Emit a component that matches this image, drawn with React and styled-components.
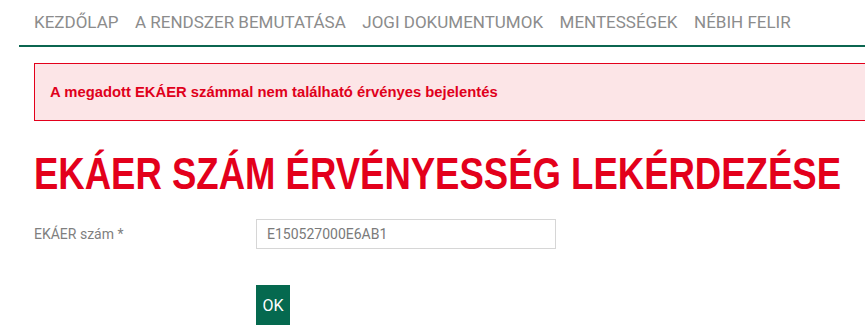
import React from "react";
import styled, { createGlobalStyle } from "styled-components";

const Global = createGlobalStyle`
  html, body { margin: 0; padding: 0; background: #fff; overflow: hidden; }
  body { font-family: Roboto, "Liberation Sans", Arial, sans-serif; }
  * { box-sizing: border-box; }
`;

const Page = styled.div`
  width: 1100px;
`;

const NavBar = styled.nav`
  margin-left: 19px;
  padding: 11px 0 12px 15px;
  border-bottom: 2px solid #0b6650;
  display: flex;
  gap: 16.5px;
`;

const NavItem = styled.a`
  font-family: Roboto, "Liberation Sans", Arial, sans-serif;
  font-size: 17px;
  line-height: 22px;
  color: #8c8c8c;
  text-decoration: none;
  text-transform: uppercase;
  white-space: nowrap;
`;

const Content = styled.main`
  padding-left: 34px;
`;

const Alert = styled.div`
  margin-top: 16px;
  border: 1px solid #e3001b;
  background: #fce5e7;
  padding: 18px 15px;
  font-family: "Liberation Sans", Arial, sans-serif;
  font-weight: bold;
  font-size: 14.8px;
  line-height: 20px;
  color: #e0001b;
`;

const Title = styled.h1`
  margin: 29px 0 0;
  font-family: "Liberation Sans", Arial, sans-serif;
  font-weight: bold;
  font-size: 44px;
  line-height: 48px;
  color: #e3001b;
  white-space: nowrap;
`;

const Condensed = styled.span`
  display: inline-block;
  transform: scaleX(${(p) => p.$ratio});
  transform-origin: left center;
`;

const FormRow = styled.div`
  display: grid;
  grid-template-columns: 222px 300px;
  align-items: center;
  margin-top: 21px;
`;

const Label = styled.label`
  font-size: 14px;
  color: #7f7f7f;
`;

const Input = styled.input`
  height: 30px;
  border: 1px solid #d6d6d6;
  padding: 0 10px;
  font-family: Roboto, "Liberation Sans", Arial, sans-serif;
  font-size: 14px;
  color: #7a7a7a;
  outline: none;
  width: 300px;
`;

const Actions = styled.div`
  margin-top: 36px;
  padding-left: 222px;
`;

const Button = styled.button`
  height: 40px;
  width: 34px;
  padding: 0;
  border: none;
  background: #05694f;
  color: #fff;
  font-family: Roboto, "Liberation Sans", Arial, sans-serif;
  font-size: 16px;
  cursor: pointer;
`;

const navItems = [
  "Kezdőlap",
  "A rendszer bemutatása",
  "Jogi dokumentumok",
  "Mentességek",
  "NÉBIH FELIR",
];

export default function App() {
  return (
    <Page>
      <Global />
      <NavBar>
        {navItems.map((n) => (
          <NavItem key={n} href="#">{n}</NavItem>
        ))}
      </NavBar>
      <Content>
        <Alert>A megadott EKÁER számmal nem található érvényes bejelentés</Alert>
        <Title>
          <Condensed $ratio={0.83}>EKÁER SZÁM ÉRVÉNYESSÉG LEKÉRDEZÉSE</Condensed>
        </Title>
        <FormRow>
          <Label>EKÁER szám *</Label>
          <Input defaultValue="E150527000E6AB1" />
        </FormRow>
        <Actions>
          <Button>OK</Button>
        </Actions>
      </Content>
    </Page>
  );
}
